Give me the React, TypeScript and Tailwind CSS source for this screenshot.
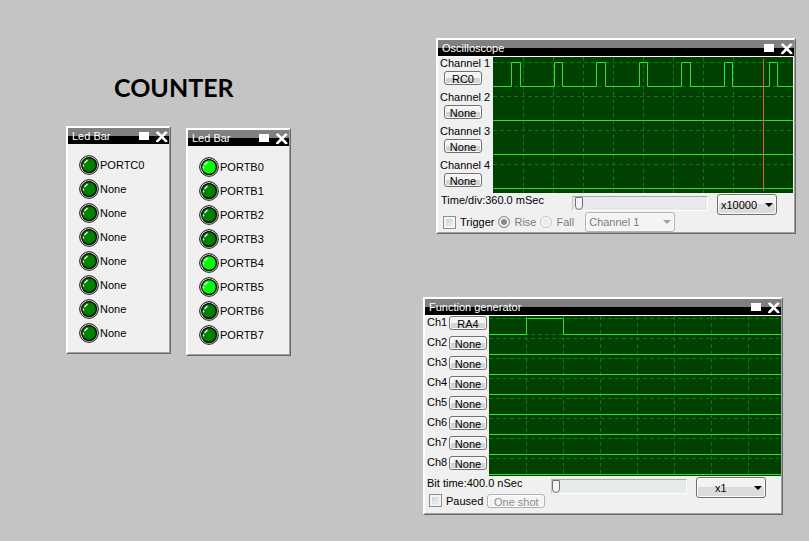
import type { ReactNode } from "react";

type WindowProps = { title: string; place: string; ruled?: boolean; children: ReactNode };

function ToolWindow({ title, place, ruled, children }: WindowProps) {
  return (
    <section
      aria-label={title}
      className={`absolute border border-t-white border-l-white border-r-[#696969] border-b-[#696969] ${place}`}
    >
      <div className="border border-t-white border-l-white border-r-[#a0a0a0] border-b-[#a0a0a0] bg-[#f0f0f0]">
        <header
          className={`flex items-center bg-linear-to-b from-[#808080] from-50% to-black to-50% pl-1 text-white ${
            ruled ? "border-b border-white" : ""
          }`}
        >
          <h2 className="flex-1 leading-4">{title}</h2>
          <button aria-label="Maximize" className="mr-[6px] h-2 w-2.5 bg-white" />
          <button aria-label="Close" className="h-4 w-[14px]">
            <svg viewBox="0 0 14 16" className="block h-4 w-[14px]" stroke="#fff">
              <path d="M2 4l9.500 9.500M11.500 4L2 13.500" strokeWidth="2.500" />
              <path d="M1 4.500h2M10.500 4.500h2M1 13.500h2M10.500 13.500h2" strokeWidth="1" />
            </svg>
          </button>
        </header>
        {children}
      </div>
    </section>
  );
}

function Led({ on }: { on: boolean }) {
  return (
    <svg viewBox="0 0 20 20" className="h-5 w-5" role="img" aria-label={on ? "on" : "off"}>
      <circle cx="10" cy="10" r="9.300" fill="#fff" stroke="#000" />
      <path d="M16.200 3.800A8.700 8.700 0 0 1 3.800 16.200z" fill="#909090" />
      <circle cx="10" cy="10" r="7.400" fill={on ? "#00ff00" : "#008000"} stroke="#000" strokeWidth="1.200" />
      <path d="M4.500 11.500V9.500M5.500 8L8.500 5" stroke="#f0fff0" strokeWidth="1.300" fill="none" />
    </svg>
  );
}

function LedBar({ place, leds }: { place: string; leds: [string, boolean][] }) {
  return (
    <ToolWindow title="Led Bar" place={place}>
      <ul className="pt-[9px] pb-[7px] pl-[11px]">
        {leds.map(([name, on], i) => (
          <li key={i} className="flex h-6 items-center gap-px">
            <Led on={on} />
            {name}
          </li>
        ))}
      </ul>
    </ToolWindow>
  );
}

function PushButton({ id, size, disabled, children }: { id?: string; size: string; disabled?: boolean; children: ReactNode }) {
  return (
    <button
      id={id}
      disabled={disabled}
      className={`flex items-center justify-center rounded-[3px] border border-[#707070] bg-linear-to-b from-[#f4f4f4] from-50% to-[#d4d4d4] to-50% pt-px leading-3 shadow-[inset_0_0_0_1px_#fafafa] disabled:border-[#b0b4b8] disabled:from-[#f4f4f4] disabled:to-[#f4f4f4] disabled:text-[#8c8c8c] ${size}`}
    >
      {children}
    </button>
  );
}

type DropDownProps = { label: string; value: string; size: string; inset: string; disabled?: boolean };

function DropDown({ label, value, size, inset, disabled }: DropDownProps) {
  return (
    <div className={`relative ${size}`}>
      <select
        aria-label={label}
        disabled={disabled}
        className={`h-full w-full appearance-none rounded-[3px] border border-[#707070] bg-linear-to-b from-[#f3f3f3] from-50% to-[#dcdcdc] to-50% opacity-100 shadow-[inset_0_0_0_1px_#fafafa] disabled:border-[#b0b4b8] disabled:from-[#f4f4f4] disabled:to-[#f4f4f4] disabled:text-[#7c7c7c] ${inset}`}
      >
        <option>{value}</option>
      </select>
      <svg
        viewBox="0 0 8 4"
        className={`pointer-events-none absolute top-1/2 right-1 h-1 w-2 -translate-y-1/2 ${disabled ? "fill-[#a0a0a0]" : "fill-black"}`}
      >
        <path d="M0 0h8L4 4z" />
      </svg>
    </div>
  );
}

function TrackBar({ id, inset }: { id: string; inset: string }) {
  return (
    <input
      id={id}
      type="range"
      defaultValue={0}
      className={`mt-0.5 ml-auto h-[15px] w-[136px] appearance-none border border-t-[#a8a8a8] border-r-white border-b-white border-l-[#c8c8c8] bg-[#e6eaea] [&::-webkit-slider-thumb]:h-[13px] [&::-webkit-slider-thumb]:w-2 [&::-webkit-slider-thumb]:appearance-none [&::-webkit-slider-thumb]:rounded-t-[1px] [&::-webkit-slider-thumb]:rounded-b-[4px] [&::-webkit-slider-thumb]:border [&::-webkit-slider-thumb]:border-[#707070] [&::-webkit-slider-thumb]:bg-[#f4f4f4] ${inset}`}
    />
  );
}

function CheckBox({ label }: { label: string }) {
  return (
    <label className="flex items-center gap-1">
      <input
        type="checkbox"
        className="h-[13px] w-[13px] appearance-none border border-[#8e8f8f] bg-linear-to-br from-[#c8ccd0] to-[#f6f6f6] shadow-[inset_0_0_0_2px_#f4f4f4] checked:bg-[#404040]"
      />
      {label}
    </label>
  );
}

function Radio({ label, checked }: { label: string; checked?: boolean }) {
  return (
    <label className="flex items-center gap-1 text-[#7c7c7c]">
      <input
        type="radio"
        name="edge"
        disabled
        defaultChecked={checked}
        className="h-3 w-3 appearance-none rounded-full border border-[#c8c8c8] bg-[#ececec] shadow-[inset_0_0_0_2px_#f4f4f4] checked:border-[#909090] checked:bg-[#8a8a8a]"
      />
      {label}
    </label>
  );
}

type ScopeProps = {
  width: number;
  height: number;
  column: number;
  columns: number;
  rows: number;
  pitch: number;
  high: number;
  low: number;
  pulses: [number, number][];
  cursor?: number;
};

function Scope({ width, height, column, columns, rows, pitch, high, low, pulses, cursor }: ScopeProps) {
  const verticals = Array.from({ length: columns }, (_, i) => (i + 1) * column + 0.5);
  const lines = Array.from({ length: rows }, (_, i) => i * pitch + 0.5);
  const first = pulses.map(([a, b]) => `H${a + 0.5}V${high + 0.5}H${b + 0.5}V${low + 0.5}`).join("");
  return (
    <svg viewBox={`0 0 ${width} ${height}`} preserveAspectRatio="none" className="min-w-0 flex-1 bg-[#004000]" fill="none">
      <g stroke="#0c7a0c" strokeDasharray="4 3">
        {verticals.map((x) => (
          <path key={x} d={`M${x} 0V${height}`} />
        ))}
        {lines.map((y) => (
          <path key={y} d={`M0 ${y + high}H${width - 2}`} />
        ))}
        <path d={`M0 ${low + 0.5}H${width}`} />
      </g>
      <g stroke="#30e030">
        <path d={`M0 ${low + 0.5}${first}H${width}`} />
        {lines.slice(1).map((y) => (
          <path key={y} d={`M0 ${y + low}H${width}`} />
        ))}
      </g>
      {cursor !== undefined && <rect x={cursor} y="2" width="1" height={height - 4} fill="#e05c38" />}
    </svg>
  );
}

export default function App() {
  return (
    <main className="relative min-h-screen overflow-hidden bg-[#c4c4c4] font-['Liberation_Sans',Arial,sans-serif] text-[11px] leading-3 text-black">
      <h1 className="absolute top-[71px] left-[114px] font-['Lato',sans-serif] text-[25px] leading-8 font-bold">COUNTER</h1>

      <LedBar
        place="left-[66px] top-[126px] w-[105px]"
        leds={[
          ["PORTC0", false],
          ["None", false],
          ["None", false],
          ["None", false],
          ["None", false],
          ["None", false],
          ["None", false],
          ["None", false],
        ]}
      />
      <LedBar
        place="left-[186px] top-[128px] w-[105px]"
        leds={[
          ["PORTB0", true],
          ["PORTB1", false],
          ["PORTB2", false],
          ["PORTB3", false],
          ["PORTB4", true],
          ["PORTB5", true],
          ["PORTB6", false],
          ["PORTB7", false],
        ]}
      />

      <ToolWindow title="Oscilloscope" place="left-[436px] top-[38px] w-[360px]" ruled>
        <div className="flex pr-px">
          <div className="w-[55px] pl-0.5">
            {["RC0", "None", "None", "None"].map((source, i) => (
              <div key={i} className="h-[34px]">
                <label htmlFor={`osc${i}`} className="block pb-0.5">
                  Channel {i + 1}
                </label>
                <div className="pl-1">
                  <PushButton id={`osc${i}`} size="h-[14px] w-[38px]">
                    {source}
                  </PushButton>
                </div>
              </div>
            ))}
          </div>
          <Scope
            width={300}
            height={136}
            column={30}
            columns={8}
            rows={4}
            pitch={34}
            high={5}
            low={29}
            pulses={[
              [18, 27],
              [61, 69],
              [103, 112],
              [146, 154],
              [188, 197],
              [231, 239],
              [276, 284],
            ]}
            cursor={270}
          />
        </div>
        <div className="flex">
          <div className="flex-1">
            <div className="flex h-[19px] items-start pt-px pl-[3px]">
              <label htmlFor="timediv">Time/div:360.0 mSec</label>
              <TrackBar id="timediv" inset="px-0.5" />
            </div>
            <div className="flex h-5 items-center gap-1 pl-[5px]">
              <CheckBox label="Trigger" />
              <Radio label="Rise" checked />
              <Radio label="Fall" />
              <DropDown label="Trigger channel" value="Channel 1" size="ml-[7px] h-5 w-[90px]" inset="pl-[3px]" disabled />
            </div>
          </div>
          <DropDown label="Time multiplier" value="x10000" size="mt-px mr-[17px] ml-[9px] h-[21px] w-[60px]" inset="pl-[3px]" />
        </div>
      </ToolWindow>

      <ToolWindow title="Function generator" place="left-[423px] top-[297px] w-[360px]" ruled>
        <div className="flex">
          <div className="w-16 pl-0.5">
            {["RA4", "None", "None", "None", "None", "None", "None", "None"].map((source, i) => (
              <div key={i} className="flex h-5 items-start">
                <label htmlFor={`gen${i}`} className="w-[22px]">
                  Ch{i + 1}
                </label>
                <PushButton id={`gen${i}`} size="h-[14px] w-[38px]">
                  {source}
                </PushButton>
              </div>
            ))}
          </div>
          <Scope width={292} height={160} column={37} columns={7} rows={8} pitch={20} high={2} low={18} pulses={[[37, 74]]} />
        </div>
        <div className="flex">
          <div className="flex-1">
            <div className="flex h-[18px] items-start pt-px pl-0.5">
              <label htmlFor="bittime">Bit time:400.0 nSec</label>
              <TrackBar id="bittime" inset="px-0" />
            </div>
            <div className="flex h-[19px] items-start gap-1 pl-1">
              <CheckBox label="Paused" />
              <PushButton size="h-[14px] w-[58px]" disabled>
                One shot
              </PushButton>
            </div>
          </div>
          <DropDown label="Bit time multiplier" value="x1" size="mt-px mr-[15px] ml-[9px] h-[21px] w-[70px]" inset="pl-[18px]" />
        </div>
      </ToolWindow>
    </main>
  );
}
